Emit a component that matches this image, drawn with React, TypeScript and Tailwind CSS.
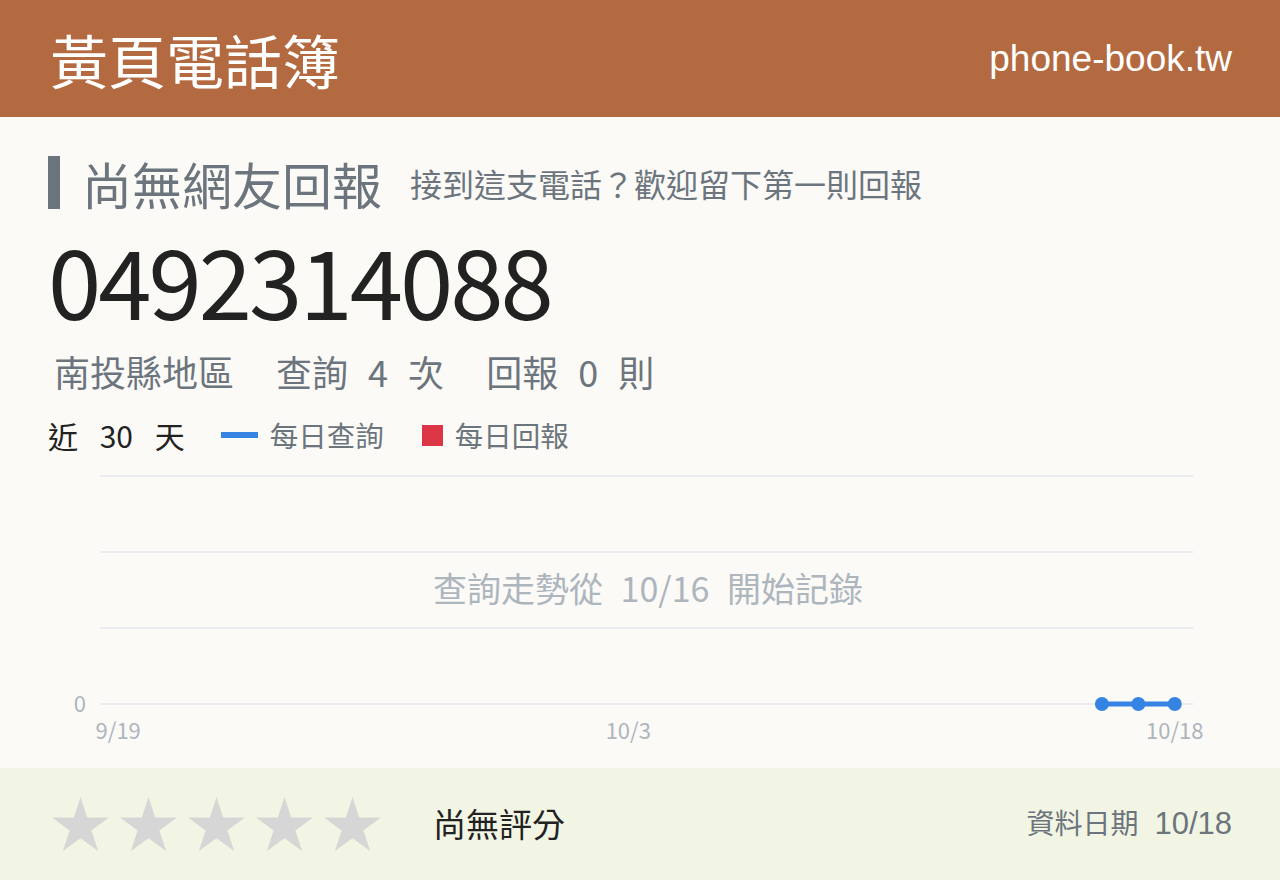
import React from "react";

const CJK = "'Noto Sans CJK TC', 'Noto Sans', sans-serif";
const LATIN = "'Liberation Sans', Arial, 'Noto Sans CJK TC', sans-serif";

// daily query counts for the last 30 days (9/19 .. 10/18)
const days = Array.from({ length: 30 }, (_, i) => {
  const d = new Date(2024, 8, 19 + i);
  return `${d.getMonth() + 1}/${d.getDate()}`;
});
const queries: (number | null)[] = days.map((_, i) => (i >= 27 ? 0 : null));

function Star() {
  return (
    <svg width="57" height="54" viewBox="0 0 57 54">
      <polygon
        points="28.5,0 35.2,20.6 57,20.6 39.4,33.4 46.1,54 28.5,41.3 10.9,54 17.6,33.4 0,20.6 21.8,20.6"
        fill="#d6d6d6"
      />
    </svg>
  );
}

function TrendChart() {
  const left = 52;
  const right = 1145;
  const step = (right - left) / days.length;
  const xAt = (i: number) => left + step * (i + 0.5);
  const grid = [16, 92, 168, 244];
  const pts = queries
    .map((v, i) => (v === null ? null : { x: xAt(i), y: 244 - v }))
    .filter((p): p is { x: number; y: number } => p !== null);

  return (
    <svg width="1184" height="300" viewBox="0 0 1184 300" style={{ fontFamily: CJK }}>
      {grid.map((y) => (
        <line key={y} x1={left} x2={right} y1={y} y2={y} stroke="#e9ebee" strokeWidth="2" />
      ))}
      <text x="38" y="252" textAnchor="end" fontSize="22" fill="#adb5bd">0</text>
      {[0, 14, 29].map((i) => (
        <text key={i} x={xAt(i)} y="279" textAnchor="middle" fontSize="22" fill="#adb5bd">
          {days[i]}
        </text>
      ))}
      <text x="600" y="142" textAnchor="middle" fontSize="34" fill="#adb5bd" style={{ wordSpacing: "10px" }}>
        查詢走勢從 10/16 開始記錄
      </text>
      <polyline
        points={pts.map((p) => `${p.x},${p.y}`).join(" ")}
        fill="none"
        stroke="#3584e4"
        strokeWidth="5"
      />
      {pts.map((p) => (
        <circle key={p.x} cx={p.x} cy={p.y} r="7" fill="#3584e4" />
      ))}
    </svg>
  );
}

export default function App() {
  return (
    <div className="h-[880px] w-[1280px] flex flex-col bg-[#fbfaf7]" style={{ fontFamily: CJK }}>
      {/* header */}
      <header className="h-[117px] shrink-0 bg-[#b36a40] px-[50px] pr-[48px] flex items-center justify-between">
        <h1 className="text-[58px] leading-none text-white">黃頁電話簿</h1>
        <span className="text-[37px] text-white" style={{ fontFamily: LATIN }}>
          phone-book.tw
        </span>
      </header>

      {/* report summary */}
      <main className="flex-1 px-12">
        <div className="mt-[39px] h-[53px] flex items-center">
          <div className="w-3 h-[53px] bg-[#6c757d]" />
          <h2 className="ml-[22px] text-[50px] leading-none text-[#6c757d]">尚無網友回報</h2>
          <p className="ml-7 text-[32px] leading-none text-[#6c757d]">接到這支電話？歡迎留下第一則回報</p>
        </div>

        <div className="mt-[24px] h-[96px] leading-[92px] text-[96px] text-[#222] tracking-[-3px]">
          0492314088
        </div>

        <div className="mt-[20px] h-[44px] flex items-center text-[36px] leading-[44px] text-[#6c757d] pl-[6px] [word-spacing:12px]">
          <span>南投縣地區</span>
          <span className="ml-[42px]">查詢 4 次</span>
          <span className="ml-[42px]">回報 0 則</span>
        </div>

        <div className="mt-[22px] flex items-center h-[40px]">
          <span className="text-[30px] leading-[40px] text-[#222] [word-spacing:15px]">近 30 天</span>
          <span className="ml-9 w-[37px] h-[6px] bg-[#3584e4]" />
          <span className="ml-3 text-[28.5px] leading-[40px] text-[#6c757d]">每日查詢</span>
          <span className="ml-[38px] w-[21px] h-[21px] bg-[#dc3545]" />
          <span className="ml-3 text-[28.5px] leading-[40px] text-[#6c757d]">每日回報</span>
        </div>

        <div className="mt-[5px]">
          <TrendChart />
        </div>
      </main>

      {/* rating footer */}
      <footer className="h-[112px] shrink-0 bg-[#f2f5e3] px-[52px] pr-[48px] flex items-center">
        <div className="flex gap-[11px]">
          {[0, 1, 2, 3, 4].map((i) => (
            <Star key={i} />
          ))}
        </div>
        <span className="ml-[52px] text-[33px] text-[#222]">尚無評分</span>
        <span className="ml-auto text-[28px] text-[#6c757d]">
          資料日期
          <span className="ml-4 text-[31px]" style={{ fontFamily: LATIN }}>10/18</span>
        </span>
      </footer>
    </div>
  );
}
